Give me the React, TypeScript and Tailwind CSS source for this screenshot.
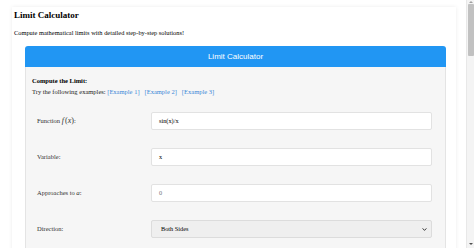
const EXAMPLES = ["[Example 1]", "[Example 2]", "[Example 3]"];

const serif = "font-['Liberation_Serif','Times_New_Roman',serif]";
const sans = "font-['Liberation_Sans',Arial,sans-serif]";

function Row({ label, children }: { label: React.ReactNode; children: React.ReactNode }) {
  return (
    <div className="flex items-center h-[18px]">
      <label className="w-[114px] shrink-0 text-[6.5px] text-[#333]">{label}</label>
      <div className="flex-1">{children}</div>
    </div>
  );
}

function FakeScrollbar() {
  return (
    <div className="w-[8px] shrink-0 bg-[#f4f4f4] border-l border-[#e8e8e8] flex flex-col items-center py-[1px]">
      <svg width="4" height="2" viewBox="0 0 4 2">
        <path d="M0 2 L2 0 L4 2 Z" fill="#a0a0a0" />
      </svg>
      <div className="mt-[1px] w-[6px] h-[52px] bg-[#c1c1c1] rounded-[1px]" />
      <div className="flex-1" />
      <svg width="4" height="2" viewBox="0 0 4 2" className="mb-[2px]">
        <path d="M0 0 L2 2 L4 0 Z" fill="#505050" />
      </svg>
    </div>
  );
}

export default function App() {
  return (
    <div className={`h-[248px] flex overflow-hidden bg-white text-black ${serif}`}>
      <div className="flex-1 overflow-hidden pt-[7px] pl-[12px] pr-[10px]">
        <div className="bg-white shadow-[0_0_4px_rgba(0,0,0,0.08)] pb-[20px]">
          <h1 className="pl-[2px] pt-[3px] text-[9px] font-bold leading-[11px]">Limit Calculator</h1>
          <p className="pl-[2px] mt-[8px] text-[6.4px] leading-[8px]">
            Compute mathematical limits with detailed step-by-step solutions!
          </p>

          <div className="mx-[13px] mt-[9px] w-[421px]">
            <div
              className={`h-[21px] bg-[#2196f3] rounded-t-[3px] flex items-center justify-center text-white text-[8px] ${sans}`}
            >
              Limit Calculator
            </div>
            <div className="bg-[#f6f6f6] border-x border-b border-[#e4e4e4] pl-[6px] pr-[13px] pt-[10px] pb-[40px]">
              <div className="text-[6.5px] font-bold leading-[8px]">Compute the Limit:</div>
              <div className="text-[6.5px] leading-[8px] mt-[3px] text-[#222]">
                Try the following examples:{" "}
                {EXAMPLES.map((e) => (
                  <a key={e} href="#" className="text-[#3a87d6] mr-[5px]">
                    {e}
                  </a>
                ))}
              </div>

              <div className="pl-[5px] mt-[16px] flex flex-col gap-[18px]">
                <Row
                  label={
                    <>
                      Function <i className="text-[8px] mr-[1px]">f</i>
                      <span className="text-[8px]">(</span>
                      <i className="text-[8px]">x</i>
                      <span className="text-[8px]">)</span>:
                    </>
                  }
                >
                  <div className="h-[18px] bg-white border border-[#e2e2e2] rounded-[2px] pl-[7px] flex items-center text-[6.3px]">
                    sin(x)/x
                  </div>
                </Row>
                <Row label="Variable:">
                  <div className="h-[18px] bg-white border border-[#e2e2e2] rounded-[2px] pl-[7px] flex items-center text-[6.3px]">
                    x
                  </div>
                </Row>
                <Row
                  label={
                    <>
                      Approaches to <i className="text-[7px]">a</i>:
                    </>
                  }
                >
                  <div className="h-[18px] bg-white border border-[#e2e2e2] rounded-[2px] pl-[7px] flex items-center text-[6.3px] text-[#777]">
                    0
                  </div>
                </Row>
                <Row label="Direction:">
                  <div className="h-[18px] bg-[#efefef] border border-[#dcdcdc] rounded-[2px] pl-[9px] pr-[4px] flex items-center justify-between text-[6.3px]">
                    <span>Both Sides</span>
                    <svg width="5" height="3" viewBox="0 0 6 4">
                      <path d="M0.5 0.5 L3 3.2 L5.5 0.5" stroke="#333" strokeWidth="1.3" fill="none" />
                    </svg>
                  </div>
                </Row>
              </div>
            </div>
          </div>
        </div>
      </div>
      <FakeScrollbar />
    </div>
  );
}
